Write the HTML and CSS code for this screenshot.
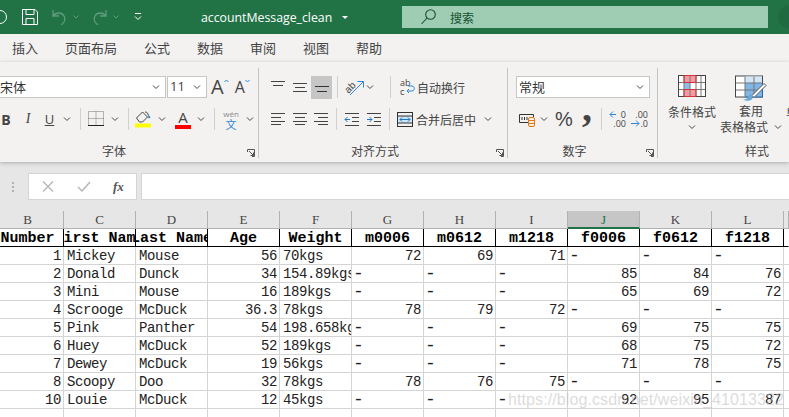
FILE: index.html
```html
<!DOCTYPE html>
<html lang="en">

<head>
    <meta charset="UTF-8">
    <meta name="viewport" content="width=device-width, initial-scale=1.0">
    <title>accountMessage_clean</title>
    <link rel="stylesheet" href="styles.css">
</head>

<body>
    <div id="titlebar">
        <span class="autosave"></span>
        <svg class="ml-save" width="16" height="16" viewBox="0 0 16 16" fill="none" stroke="#fff"><path d="M.5.5h12.5l2.500 2.500v12.500h-15zM4 .5v5h8v-5M4 15.500v-6h8v6"/></svg>
        <svg class="ml-undo" width="15" height="16" viewBox="0 0 15 16" fill="none" stroke="#5f9c7e" stroke-width="1.300"><path d="M1 1v6h6M1 7c3-4 9-4 11 0s0 7-3 9"/></svg>
        <svg class="ml-chev" width="6" height="4" viewBox="0 0 6 4" fill="none" stroke="#5f9c7e"><path d="M.5.500l2.500 2.500 2.500-2.500"/></svg>
        <svg class="ml-redo" width="15" height="16" viewBox="0 0 15 16" fill="none" stroke="#5f9c7e" stroke-width="1.300"><path d="M14 1v6h-6M14 7c-3-4-9-4-11 0s0 7 3 9"/></svg>
        <svg class="ml-chev" width="6" height="4" viewBox="0 0 6 4" fill="none" stroke="#5f9c7e"><path d="M.5.500l2.500 2.500 2.500-2.500"/></svg>
        <svg class="ml-custom" width="8" height="8" viewBox="0 0 8 8" fill="none" stroke="#fff"><path d="M1 .5h6M1 3.500l3 3 3-3"/></svg>
        <span class="filename">accountMessage_clean</span>
        <span class="caret"></span>
        <div class="search">
            <svg width="15" height="16" viewBox="0 0 15 16" fill="none" stroke="#14502f" stroke-width="1.100"><circle cx="9.500" cy="5.500" r="4.800"/><path d="M6 9l-5.500 6"/></svg>
            <span>搜索</span>
        </div>
        <span class="account"></span>
    </div>

    <div id="tabs">
        <span>插入</span><span>页面布局</span><span>公式</span><span>数据</span><span>审阅</span><span>视图</span><span>帮助</span>
    </div>

    <div id="ribbon">
        <div class="group g-font">
            <div class="tools">
                <div class="select fontname">宋体<svg class="chev" width="8" height="5" viewBox="0 0 8 5"><path d="M1 .5l3 3 3-3"/></svg></div>
                <div class="select fontsize"><span class="sizeval">11</span><svg class="chev" width="8" height="5" viewBox="0 0 8 5"><path d="M1 .5l3 3 3-3"/></svg></div>
                <span class="growa">A<svg width="5" height="4" viewBox="0 0 5 4" fill="none" stroke="#2b88d8"><path d="M.5 3l2-2 2 2"/></svg></span>
                <span class="shrinka">A<svg width="5" height="4" viewBox="0 0 5 4" fill="none" stroke="#2b88d8"><path d="M.5 1l2 2 2-2"/></svg></span>
            </div>
            <div class="tools row-two">
                <b class="btn w22">B</b>
                <i class="btn w22 italic">I</i>
                <u class="btn w21 under">U</u>
                <svg class="chev ml-3" width="8" height="5" viewBox="0 0 8 5"><path d="M1 .5l3 3 3-3"/></svg>
                <span class="sep ml-9"></span>
                <svg class="ml-7" width="16" height="16" viewBox="0 0 16 16" fill="none" stroke="#777" stroke-dasharray="1 1"><path d="M.5.500h15v14h-15zM8 .5v14M.5 7.500h15"/><path d="M0 14.500h16" stroke="#222" stroke-dasharray="none"/></svg>
                <svg class="chev ml-7" width="8" height="5" viewBox="0 0 8 5"><path d="M1 .5l3 3 3-3"/></svg>
                <span class="sep ml-9"></span>
                <svg class="ml-6" width="17" height="18" viewBox="0 0 17 18" fill="none"><path d="M1.500 8l6-6 5 5-5 5h-3z" stroke="#444"/><path d="M10 2c2 0 3 1 3 3" stroke="#444"/><path d="M13 4l2.500 3.500-2 1z" fill="#1f6fb5"/><rect y="13.500" width="16" height="4" fill="#ffff00"/></svg>
                <svg class="chev ml-6" width="8" height="5" viewBox="0 0 8 5"><path d="M1 .5l3 3 3-3"/></svg>
                <span class="colora ml-9">A<span class="redbar"></span></span>
                <svg class="chev ml-6" width="8" height="5" viewBox="0 0 8 5"><path d="M1 .5l3 3 3-3"/></svg>
                <span class="sep ml-9"></span>
                <span class="wen ml-8"><small>wén</small><em>文</em></span>
                <svg class="chev ml-7" width="8" height="5" viewBox="0 0 8 5"><path d="M1 .5l3 3 3-3"/></svg>
            </div>
            <div class="grouplabel">字体</div>
            <svg class="launcher" width="8" height="8" viewBox="0 0 8 8" fill="none" stroke="#555"><path d="M.5 3V.5h7v7H5M2 2l4.500 4.500M6.500 3.500v3h-3"/></svg>
        </div>

        <div class="group g-align">
            <div class="tools">
                <span class="btn al"><svg width="14" height="12" viewBox="0 0 14 12" stroke="#444"><path d="M0 .5h14M2 4.500h10"/></svg></span>
                <span class="btn al ml-2"><svg width="14" height="12" viewBox="0 0 14 12" stroke="#444"><path d="M0 2.500h14M2 6.500h10M0 10.500h14"/></svg></span>
                <span class="btn al selected ml-1"><svg width="14" height="12" viewBox="0 0 14 12" stroke="#333"><path d="M0 6.500h14M2 11.500h10" transform="translate(0 -1)"/></svg></span>
                <span class="sep ml-5"></span>
                <svg class="ml-6" width="22" height="18" viewBox="0 0 22 18" fill="none"><text x="1" y="13" font-size="10" font-family="Liberation Sans" fill="#444" transform="rotate(-45 6 10)">ab</text><path d="M6 17L19 4M13.500 3.500h6v6" stroke="#2b88d8"/></svg>
                <svg class="chev" width="8" height="5" viewBox="0 0 8 5"><path d="M1 .5l3 3 3-3"/></svg>
                <span class="sep ml-16"></span>
                <span class="wrapicon ml-9">ab<br>c</span>
                <svg class="wraparrow" width="9" height="10" viewBox="0 0 9 10" fill="none" stroke="#2b88d8"><path d="M2 1h4c3 0 3 5 0 5H1M3 4L1 6l2 2"/></svg>
                <span class="label ml-2">自动换行</span>
            </div>
            <div class="tools row-two">
                <span class="btn al"><svg width="14" height="12" viewBox="0 0 14 12" stroke="#444"><path d="M0 .5h14M0 4.500h10M0 8.500h14M0 11.500h10"/></svg></span>
                <span class="btn al ml-2"><svg width="14" height="12" viewBox="0 0 14 12" stroke="#444"><path d="M0 .5h14M2 4.500h10M0 8.500h14M2 11.500h10"/></svg></span>
                <span class="btn al ml-1"><svg width="14" height="12" viewBox="0 0 14 12" stroke="#444"><path d="M0 .5h14M4 4.500h10M0 8.500h14M4 11.500h10"/></svg></span>
                <span class="sep ml-5"></span>
                <svg class="ml-7" width="16" height="13" viewBox="0 0 16 13" fill="none"><path d="M1 .5h14M8 4.500h7M8 8.500h7M1 12.500h14" stroke="#444"/><path d="M6 6.500H1M3.500 4L1 6.500 3.500 9" stroke="#1f78c8"/></svg>
                <svg class="ml-6" width="16" height="13" viewBox="0 0 16 13" fill="none"><path d="M1 .5h14M8 4.500h7M8 8.500h7M1 12.500h14" stroke="#444"/><path d="M1 6.500h5M3.500 4L6 6.500 3.500 9" stroke="#1f78c8"/></svg>
                <span class="sep ml-7"></span>
                <svg class="ml-7" width="16" height="15" viewBox="0 0 16 15" fill="none"><rect x=".5" y=".5" width="15" height="14" stroke="#333"/><rect x="1" y="4" width="14" height="7" fill="#cfe4f6"/><path d="M1 4h14M1 11h14" stroke="#333"/><path d="M3 7.500h10M5 5.500l-2 2 2 2M11 5.500l2 2-2 2" stroke="#1f78c8"/></svg>
                <span class="label ml-3">合并后居中</span>
                <svg class="chev ml-8" width="8" height="5" viewBox="0 0 8 5"><path d="M1 .5l3 3 3-3"/></svg>
            </div>
            <div class="grouplabel">对齐方式</div>
            <svg class="launcher" width="8" height="8" viewBox="0 0 8 8" fill="none" stroke="#555"><path d="M.5 3V.5h7v7H5M2 2l4.500 4.500M6.500 3.500v3h-3"/></svg>
        </div>

        <div class="group g-number">
            <div class="tools">
                <div class="select numfmt">常规<svg class="chev" width="8" height="5" viewBox="0 0 8 5"><path d="M1 .5l3 3 3-3"/></svg></div>
            </div>
            <div class="tools row-two">
                <svg width="16" height="15" viewBox="0 0 16 15" fill="none"><path d="M9 10.500H.5v-8h14V5" stroke="#333"/><path d="M3 5v3M5.500 5v3M8 5v3" stroke="#333"/><rect x="9.500" y="5.500" width="6" height="9" rx="1.500" fill="#f3f2f1" stroke="#e8760c"/><path d="M9.500 8.500h6M9.500 11.500h6" stroke="#e8760c"/></svg>
                <svg class="chev ml-5" width="8" height="5" viewBox="0 0 8 5"><path d="M1 .5l3 3 3-3"/></svg>
                <span class="percent ml-7">%</span>
                <span class="comma ml-9">,</span>
                <span class="sep ml-10"></span>
                <span class="decimals ml-7"><svg width="7" height="9" viewBox="0 0 7 9" fill="none" stroke="#2b88d8"><path d="M7 4.500H1M4 1.500l-3 3 3 3"/></svg><span class="d1">0</span><span class="d2">.00</span></span>
                <span class="decimals ml-5"><span class="d3">.00</span><svg class="down" width="9" height="9" viewBox="0 0 9 9" fill="none" stroke="#2b88d8"><path d="M0 4.500h8M5 1.500l3 3-3 3"/></svg><span class="d4">.0</span></span>
            </div>
            <div class="grouplabel">数字</div>
            <svg class="launcher" width="8" height="8" viewBox="0 0 8 8" fill="none" stroke="#555"><path d="M.5 3V.5h7v7H5M2 2l4.500 4.500M6.500 3.500v3h-3"/></svg>
        </div>

        <div class="group g-styles">
            <div class="bigbtn first">
                <svg width="28" height="22" viewBox="0 0 28 22"><rect x=".5" y=".5" width="27" height="21" fill="#fff" stroke="#444"/><rect x="6" y="1" width="12" height="6.500" fill="#f49aa0"/><rect x="6" y="8" width="6" height="6" fill="#8bbde8"/><rect x="6" y="14.500" width="12" height="7" fill="#f49aa0"/><path d="M6 1v20M12 1v20M18 1v20M23 1v20M1 7.500h26M1 14.500h26" stroke="#777" fill="none"/><path d="M6 .5h12v7H6zM6 14.500h12v7H6z" stroke="#d13438" fill="none"/></svg>
                <span class="biglabel">条件格式</span>
                <svg class="chev" width="8" height="5" viewBox="0 0 8 5"><path d="M1 .5l3 3 3-3"/></svg>
            </div>
            <div class="bigbtn second">
                <svg width="32" height="27" viewBox="0 0 32 27" fill="none"><rect x=".5" y=".5" width="27" height="21" fill="#fff" stroke="#444"/><rect x="10" y="7" width="17" height="14" fill="#7fb6e6"/><rect x="10" y="1" width="17" height="6" fill="#d3e6f6"/><path d="M10 1v20M19 1v20M1 7.500h26M1 14.500h26" stroke="#777"/><path d="M10 21.500h17.500V7" stroke="#1f6fb5"/><path d="M29 8L17 20l2 2L31 10z" fill="#fff" stroke="#555"/><path d="M16 19c-3 0-3 3-4 4s-3 1-4 1c3 2 9 2 10-2z" fill="#6ba7db"/></svg>
                <span class="biglabel">套用</span>
                <span class="biglabel">表格格式<svg class="chev ml-6" width="8" height="5" viewBox="0 0 8 5"><path d="M1 .5l3 3 3-3"/></svg></span>
            </div>
            <span class="biglabel nextbtn">单</span>
            <div class="grouplabel">样式</div>
        </div>
    </div>

    <div id="formulabar">
        <span class="grip"></span>
        <div class="fxbox">
            <svg width="12" height="11" viewBox="0 0 12 11" stroke="#b4b4b4" stroke-width="1.200"><path d="M1 .5l10 10M11 .5l-10 10"/></svg>
            <svg width="14" height="11" viewBox="0 0 14 11" fill="none" stroke="#b4b4b4" stroke-width="1.400"><path d="M1 6l4 4 8-9"/></svg>
            <span class="fx">fx</span>
        </div>
        <div class="fxinput"></div>
    </div>

    <div id="sheet">
        <div class="row heads">
            <span>B</span><span>C</span><span>D</span><span>E</span><span>F</span><span>G</span><span>H</span><span>I</span><span class="active">J</span><span>K</span><span>L</span><span></span>
        </div>
        <div class="row titles">
            <span>Number</span><span>First Name</span><span>Last Name</span><span>Age</span><span>Weight</span><span>m0006</span><span>m0612</span><span>m1218</span><span>f0006</span><span>f0612</span><span>f1218</span><span class="plain"></span>
        </div>
        <div class="row"><span class="n">1</span><span>Mickey</span><span>Mouse</span><span class="n">56</span><span>70kgs</span><span class="n">72</span><span class="n">69</span><span class="n">71</span><span class="d">-</span><span class="d">-</span><span class="d">-</span><span></span></div>
        <div class="row"><span class="n">2</span><span>Donald</span><span>Dunck</span><span class="n">34</span><span>154.89kgs</span><span class="d">-</span><span class="d">-</span><span class="d">-</span><span class="n">85</span><span class="n">84</span><span class="n">76</span><span></span></div>
        <div class="row"><span class="n">3</span><span>Mini</span><span>Mouse</span><span class="n">16</span><span>189kgs</span><span class="d">-</span><span class="d">-</span><span class="d">-</span><span class="n">65</span><span class="n">69</span><span class="n">72</span><span></span></div>
        <div class="row"><span class="n">4</span><span>Scrooge</span><span>McDuck</span><span class="n">36.3</span><span>78kgs</span><span class="n">78</span><span class="n">79</span><span class="n">72</span><span class="d">-</span><span class="d">-</span><span class="d">-</span><span></span></div>
        <div class="row"><span class="n">5</span><span>Pink</span><span>Panther</span><span class="n">54</span><span>198.658kgs</span><span class="d">-</span><span class="d">-</span><span class="d">-</span><span class="n">69</span><span class="n">75</span><span class="n">75</span><span></span></div>
        <div class="row"><span class="n">6</span><span>Huey</span><span>McDuck</span><span class="n">52</span><span>189kgs</span><span class="d">-</span><span class="d">-</span><span class="d">-</span><span class="n">68</span><span class="n">75</span><span class="n">72</span><span></span></div>
        <div class="row"><span class="n">7</span><span>Dewey</span><span>McDuck</span><span class="n">19</span><span>56kgs</span><span class="d">-</span><span class="d">-</span><span class="d">-</span><span class="n">71</span><span class="n">78</span><span class="n">75</span><span></span></div>
        <div class="row"><span class="n">8</span><span>Scoopy</span><span>Doo</span><span class="n">32</span><span>78kgs</span><span class="n">78</span><span class="n">76</span><span class="n">75</span><span class="d">-</span><span class="d">-</span><span class="d">-</span><span></span></div>
        <div class="row"><span class="n">10</span><span>Louie</span><span>McDuck</span><span class="n">12</span><span>45kgs</span><span class="d">-</span><span class="d">-</span><span class="d">-</span><span class="n">92</span><span class="n">95</span><span class="n">87</span><span></span></div>
        <div class="row"><span></span><span></span><span></span><span></span><span></span><span></span><span></span><span></span><span></span><span></span><span></span><span></span></div>
    </div>

    <div class="watermark">https://blog.csdn.net/weixin_41013322</div>
</body>

</html>
```

FILE: styles.css
```css
* {
    box-sizing: border-box;
    margin: 0;
    padding: 0;
}

html,
body {
    height: 417px;
    overflow: hidden;
}

body {
    position: relative;
    background: #fff;
    color: #444;
    font-family: "Noto Sans CJK SC", "Liberation Sans", sans-serif;
    font-size: 12px;
}

svg {
    display: block;
    flex: none;
}

/* spacing helpers */
.ml-1 { margin-left: 1px; }
.ml-2 { margin-left: 2px; }
.ml-3 { margin-left: 3px; }
.ml-5 { margin-left: 5px; }
.ml-6 { margin-left: 6px; }
.ml-7 { margin-left: 7px; }
.ml-8 { margin-left: 8px; }
.ml-9 { margin-left: 9px; }
.ml-10 { margin-left: 10px; }
.ml-16 { margin-left: 16px; }

/* title bar */
#titlebar {
    display: flex;
    align-items: center;
    height: 34px;
    background: #217346;
    color: #fff;
}

.autosave {
    flex: none;
    width: 14px;
    height: 14px;
    margin-left: -7px;
    border: 1px solid #fff;
    border-radius: 50%;
}

.ml-save { margin-left: 15px; }
.ml-undo { margin-left: 14px; }
.ml-chev { margin-left: 6px; }
.ml-redo { margin-left: 13px; }
.ml-custom { margin-left: 15px; }

.filename {
    flex: none;
    width: 133px;
    margin-left: 59px;
    font-family: "Open Sans", sans-serif;
    font-size: 12.3px;
    white-space: nowrap;
}

.caret {
    flex: none;
    width: 0;
    height: 0;
    margin-left: 8px;
    border-top: 3px solid #fff;
    border-left: 3px solid transparent;
    border-right: 3px solid transparent;
}

.search {
    display: flex;
    align-items: center;
    flex: none;
    width: 366px;
    height: 22px;
    margin-left: 54px;
    padding-left: 19px;
    background: #9fcdb3;
    color: #14502f;
}

.search span {
    margin-left: 14px;
}

.account {
    flex: none;
    width: 30px;
    height: 24px;
    margin-left: 10px;
    border-radius: 12px 0 0 12px;
    background: #1f6a41;
}

/* tabs */
#tabs {
    display: flex;
    align-items: center;
    gap: 27px;
    height: 28px;
    padding: 0 0 2px 12px;
    background: #f3f2f1;
    font-size: 13px;
}

/* ribbon */
#ribbon {
    display: flex;
    height: 100px;
    padding-top: 6px;
    background: #f3f2f1;
    box-shadow: 0 1px 4px rgba(0, 0, 0, .25);
    position: relative;
    overflow: hidden;
}

.group {
    position: relative;
    flex: none;
    height: 90px;
    padding-top: 8px;
    border-right: 1px solid #c4c4c4;
}

.g-font {
    width: 289px;
    margin-left: -30px;
}

.g-align {
    width: 249px;
}

.g-number {
    width: 150px;
}

.g-styles {
    width: 200px;
    border-right: 0;
}

.tools {
    display: flex;
    align-items: center;
    height: 22px;
}

.row-two {
    margin-top: 10px;
}

.g-font .row-two { padding-left: 25px; }
.g-align .tools { padding-left: 9px; }
.g-number .row-two { padding-left: 11px; }

.grouplabel {
    position: absolute;
    left: 0;
    right: 0;
    bottom: -2px;
    line-height: 18px;
    text-align: center;
}

.g-align .grouplabel,
.g-number .grouplabel {
    right: 16px;
}

.g-styles .grouplabel {
    right: auto;
    left: 87px;
}

.launcher {
    position: absolute;
    right: 3px;
    bottom: 1px;
}

.chev {
    fill: none;
    stroke: #444;
}

.select {
    display: flex;
    align-items: center;
    height: 22px;
    padding-bottom: 2px;
    background: #fff;
    border: 1px solid #c6c6c6;
    color: #333;
    font-size: 13px;
}

.select .chev {
    margin-left: auto;
    margin-right: 5px;
    margin-top: 2px;
}

.fontname {
    flex: none;
    width: 196px;
    padding-left: 29px;
}

.fontsize {
    flex: none;
    width: 40px;
    margin-left: 1px;
    padding-left: 2px;
}

.sizeval {
    font-family: "Open Sans", sans-serif;
    color: #444;
}

.numfmt {
    width: 134px;
    margin-left: 8px;
    padding-left: 2px;
}

.growa,
.shrinka {
    display: flex;
    align-items: flex-start;
    flex: none;
    font-family: "Open Sans", sans-serif;
    line-height: 22px;
}

.growa {
    margin-left: 4px;
    font-size: 20px;
}

.shrinka {
    margin-left: 6px;
    font-size: 16px;
}

.growa svg,
.shrinka svg {
    margin-top: 3px;
}

.btn {
    display: flex;
    align-items: center;
    justify-content: center;
    flex: none;
    height: 22px;
    font-family: "Open Sans", sans-serif;
    font-size: 14px;
    text-decoration: none;
}

.w22 { width: 22px; }
.w21 { width: 21px; }

.italic {
    font-family: "Liberation Serif", serif;
}

.under {
    text-decoration: underline;
    font-size: 13px;
}

.al {
    width: 20px;
}

.selected {
    width: 21px;
    height: 23px;
    background: #c6c6c6;
}

.sep {
    flex: none;
    width: 1px;
    height: 22px;
    background: #d2d0ce;
}

.colora {
    position: relative;
    flex: none;
    width: 16px;
    height: 22px;
    font-family: "Open Sans", sans-serif;
    font-size: 15px;
    line-height: 18px;
    text-align: center;
}

.redbar {
    position: absolute;
    left: 0;
    bottom: 1px;
    width: 16px;
    height: 4px;
    background: #f00;
}

.wen {
    display: flex;
    flex-direction: column;
    align-items: center;
    flex: none;
    width: 16px;
    line-height: 9px;
}

.wen small {
    color: #888;
    font-family: "Open Sans", sans-serif;
    font-size: 8px;
}

.wen em {
    color: #2b88d8;
    font-style: normal;
    font-size: 11px;
    line-height: 12px;
}

.wrapicon {
    flex: none;
    width: 9px;
    font-family: "Open Sans", sans-serif;
    font-size: 9px;
    line-height: 9px;
}

.wraparrow {
    margin: 6px 0 0 -3px;
}

.label {
    white-space: nowrap;
}

.percent {
    flex: none;
    width: 18px;
    font-family: "Liberation Sans", sans-serif;
    font-size: 20px;
    line-height: 22px;
}

.comma {
    flex: none;
    width: 9px;
    height: 22px;
    margin-top: -10px;
    font-family: "Liberation Serif", serif;
    font-size: 40px;
    font-weight: bold;
    line-height: 10px;
}

.decimals {
    position: relative;
    flex: none;
    width: 17px;
    height: 18px;
    font-family: "Open Sans", sans-serif;
    font-size: 9px;
    line-height: 9px;
}

.d1 { position: absolute; right: 0; top: 0; }
.d2 { position: absolute; right: 0; top: 9px; }
.d3 { position: absolute; right: 0; top: 0; }
.d4 { position: absolute; right: 0; top: 9px; }
.down { position: absolute; left: 0; top: 9px; }

.g-styles {
    display: flex;
    align-items: flex-start;
    padding-top: 7px;
}

.bigbtn {
    display: flex;
    flex-direction: column;
    align-items: center;
    flex: none;
}

.bigbtn > svg:first-child {
    height: 28px;
}

.first {
    width: 48px;
    margin-left: 10px;
}

.first > svg:first-child {
    height: 22px;
    margin-bottom: 7px;
}

.first .chev {
    margin-top: 5px;
}

.second {
    width: 60px;
    margin-left: 5px;
}

.biglabel {
    display: flex;
    align-items: center;
    line-height: 16px;
    white-space: nowrap;
}

.nextbtn {
    margin: 29px 0 0 5px;
}

/* formula bar */
#formulabar {
    display: flex;
    align-items: center;
    height: 49px;
    background: #e6e6e6;
}

.grip {
    width: 2px;
    height: 10px;
    margin-left: 12px;
    background: repeating-linear-gradient(#b0b0b0 0 2px, transparent 2px 4px);
}

.fxbox {
    display: flex;
    align-items: center;
    width: 109px;
    height: 27px;
    margin-left: 14px;
    padding-left: 13px;
    gap: 23px;
    background: #fff;
    border: 1px solid #d4d4d4;
}

.fx {
    margin-left: -1px;
    color: #555;
    font-family: "Liberation Serif", serif;
    font-size: 13px;
    font-style: italic;
    font-weight: bold;
}

.fxinput {
    flex: 1;
    height: 27px;
    margin-left: 4px;
    background: #fff;
    border: 1px solid #d4d4d4;
    border-right: 0;
}

/* sheet */
#sheet {
    margin-left: -8px;
    font-family: "Liberation Mono", monospace;
    color: #222;
}

.row {
    display: grid;
    grid-template-columns: repeat(11, 72px) 5px;
    height: 18px;
    font-size: 14px;
    line-height: 15px;
    letter-spacing: -.4px;
}

.row span {
    overflow: hidden;
    padding: 2px 3px 0;
    white-space: nowrap;
    border-right: 1px solid #d4d4d4;
    border-bottom: 1px solid #d4d4d4;
}

.row .n {
    padding-right: 2px;
    text-align: right;
}

.row .d {
    padding-left: 1px;
    font-size: 18px;
    letter-spacing: 0;
}

.heads {
    background: #e6e6e6;
    letter-spacing: 0;
    font-size: 13px;
    line-height: 17px;
    color: #444;
}

.row.heads span {
    padding: 0;
    border-right-color: #b2b2b2;
    border-bottom-color: #b2b2b2;
    text-align: center;
    font-family: "Liberation Serif", serif;
}

.row.heads .active {
    background: #c6c6c6;
    color: #217346;
    border-bottom: 2px solid #217346;
}

.titles {
    font-size: 15px;
    font-weight: bold;
    letter-spacing: 0;
    color: #000;
}

.row.titles span {
    display: flex;
    justify-content: center;
    padding: 2px 0 0;
    border-right-color: #000;
    border-bottom-color: #000;
}

.row.titles .plain {
    border-right-color: transparent;
}

.watermark {
    position: absolute;
    left: 508px;
    top: 391px;
    color: rgba(195, 195, 195, .6);
    font-family: "Liberation Sans", sans-serif;
    font-size: 16px;
    line-height: 18px;
    letter-spacing: .1px;
    white-space: nowrap;
}
```
